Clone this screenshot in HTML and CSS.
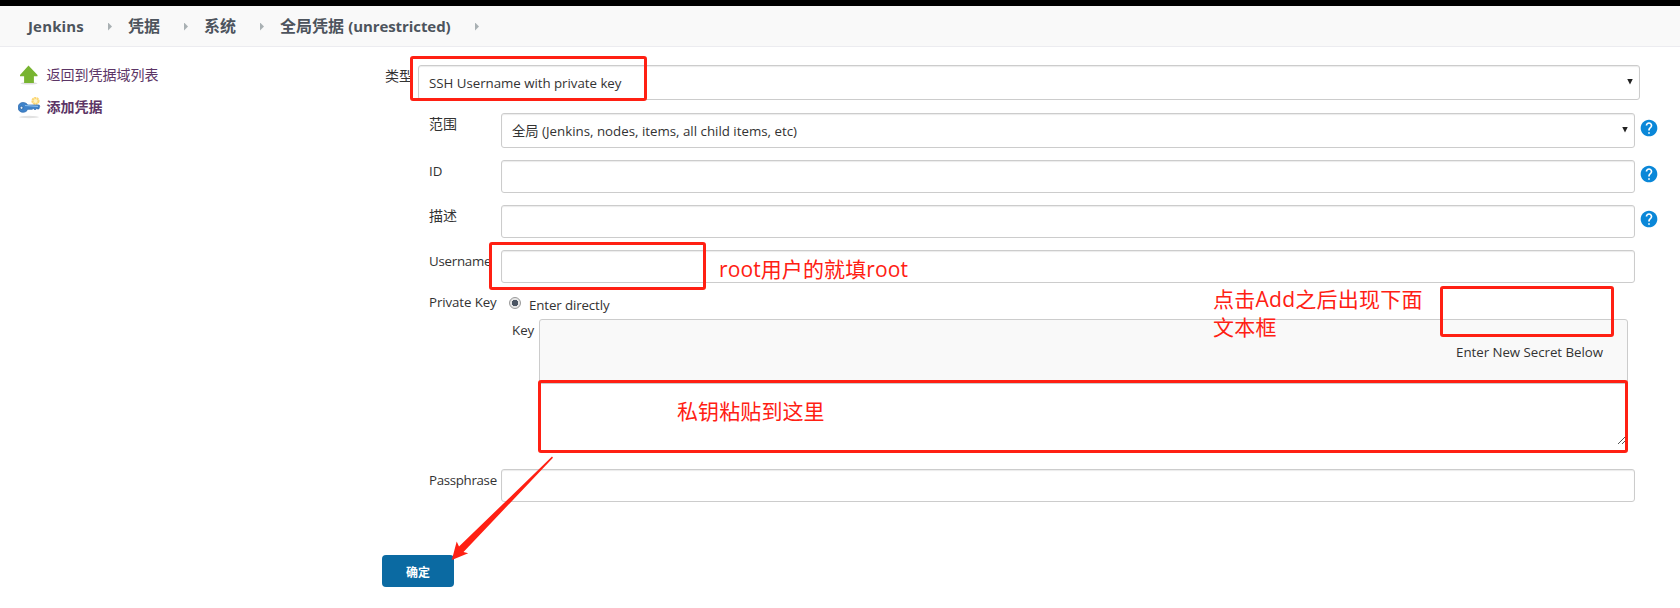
FILE: index.html
```html
<!DOCTYPE html>
<html lang="zh-CN">
<head>
<meta charset="utf-8">
<title>全局凭据 (unrestricted) [Jenkins]</title>
<link rel="stylesheet" href="styles.css">
</head>
<body>
<svg class="defs" width="0" height="0">
  <symbol id="help" viewBox="0 0 24 24">
    <path fill="#0a87d8" d="M12 2C6.48 2 2 6.48 2 12s4.48 10 10 10 10-4.48 10-10S17.52 2 12 2z"/>
    <path fill="#fff" d="M13 19h-2v-2h2v2zm2.07-7.75-.9.92C13.45 12.9 13 13.5 13 15h-2v-.5c0-1.1.45-2.1 1.17-2.83l1.24-1.26c.37-.36.59-.86.59-1.41 0-1.1-.9-2-2-2s-2 .9-2 2H8c0-2.21 1.79-4 4-4s4 1.79 4 4c0 .88-.36 1.68-.93 2.25z"/>
  </symbol>
</svg>
<header class="topbar">
  <nav class="crumbs">
    <a class="crumb crumb-home">Jenkins</a><i class="sep"></i>
    <a class="crumb">凭据</a><i class="sep"></i>
    <a class="crumb">系统</a><i class="sep"></i>
    <a class="crumb crumb-last">全局凭据 <span class="latin">(unrestricted)</span></a><i class="sep sep-last"></i>
  </nav>
</header>
<div class="page">
  <aside class="side">
    <a class="task">
      <svg width="24" height="24" viewBox="0 0 24 24"><ellipse cx="11" cy="20.3" rx="8.500" ry="1.300" fill="#ddd"/><path d="M10.500 2.500 19.500 12v1.300H15.900V20H6.100V13.300H2V12Z" fill="#78b431"/></svg>
      <span>返回到凭据域列表</span>
    </a>
    <a class="task current">
      <svg width="24" height="24" viewBox="0 0 24 24"><ellipse cx="11" cy="22" rx="10" ry="1.200" fill="#e2e2e2"/><circle cx="17.500" cy="6" r="3" fill="#fff3c0" stroke="#fbd674" stroke-width="2.200" stroke-dasharray="2 .5"/><path d="M5 7.500c2.500 0 4 1.200 4.600 2.500H20.500q1.200 0 1.200 1.300L20.800 14h-1.500l-.6-1.200-.8 1.700h-1.700l-.8-1.500-1 1.300H9.700C9 16 7.500 17.300 5 17.300c-3 0-4.900-2.200-4.900-4.900S2 7.500 5 7.500Z" fill="#3f83ca" stroke="#2e6aad" stroke-width=".7"/><path d="M7 10.500 20 11.300" stroke="#89bdea" stroke-width="1.200"/><circle cx="3.500" cy="12.800" r="1.500" fill="#e9f1f8" stroke="#265e9c" stroke-width=".8"/></svg>
      <span>添加凭据</span>
    </a>
  </aside>
  <main class="form">
    <div class="row row-kind"><label>类型</label><div class="control select"><span class="t-kind">SSH Username with private key</span><i class="caret"></i></div></div>
    <div class="nested">
      <div class="row row-select"><label class="cjk">范围</label><div class="control select"><span class="t-scope">全局 (Jenkins, nodes, items, all child items, etc)</span><i class="caret"></i></div><svg class="help"><use href="#help"/></svg></div>
      <div class="row"><label class="l-id">ID</label><div class="control"></div><svg class="help"><use href="#help"/></svg></div>
      <div class="row"><label class="cjk">描述</label><div class="control"></div><svg class="help"><use href="#help"/></svg></div>
      <div class="row"><label class="l-user">Username</label><div class="control"></div></div>
      <div class="row row-key">
        <label class="l-private">Private Key</label>
        <div class="keybox">
          <div class="choice"><i class="radio"></i><span>Enter directly</span></div>
          <div class="secret">
            <label class="l-key">Key</label>
            <div class="panel">
              <div class="panel-head">Enter New Secret Below</div>
              <div class="textarea"><svg width="10" height="10" viewBox="0 0 10 10"><path d="M1 9 9 1M5 9 9 5" stroke="#555" fill="none"/></svg></div>
            </div>
          </div>
        </div>
      </div>
      <div class="row row-pass"><label class="l-pass">Passphrase</label><div class="control"></div></div>
    </div>
    <div class="button">确定</div>
  </main>
</div>
<div class="mark mark-kind"></div>
<div class="mark mark-user"></div>
<div class="mark mark-add"></div>
<div class="mark mark-secret"></div>
<div class="note note-user">root用户的就填root</div>
<div class="note note-add">点击Add之后出现下面<br>文本框</div>
<div class="note note-secret">私钥粘贴到这里</div>
<svg class="arrow" width="110" height="110" viewBox="448 454 110 110"><path d="M552 456.600 553 457.800 463.500 552 468.200 553.300 451.800 560 456.700 541.500 459 546.500Z" fill="#ff2013"/></svg>
</body>
</html>
```
FILE: styles.css
```css
* { box-sizing: border-box; }
body {
  margin: 0;
  width: 1680px;
  height: 608px;
  position: relative;
  overflow: hidden;
  background: #fff;
  color: #333;
  font: 13.3px/20px "Open Sans", "Noto Sans CJK SC", sans-serif;
}
.defs { position: absolute; }
.topbar {
  height: 47px;
  border-top: 6px solid #000;
  border-bottom: 1px solid #ececf0;
  background: #f9f9f9;
}
.crumbs {
  display: flex;
  align-items: center;
  height: 40px;
  padding-left: 28px;
  font-size: 16px;
  font-weight: 700;
  color: #4d545d;
  white-space: nowrap;
}
.crumb { width: 32px; }
.crumb-home { width: 56px; font-size: 15px; letter-spacing: .15px; }
.crumb-last { width: 171px; }
.crumb-last .latin { font-size: 15px; letter-spacing: -.08px; }
.sep {
  width: 4px;
  height: 8px;
  margin: 1px 16px 0 24px;
  background: #a9b0b3;
  clip-path: polygon(0 0, 100% 50%, 0 100%);
}
.page { display: flex; }
.side {
  width: 381px;
  padding: 16px 0 0 18px;
}
.task {
  display: flex;
  align-items: center;
  gap: 4.5px;
  height: 24px;
  margin-bottom: 8px;
  font-size: 14px;
  color: #5c3566;
}
.task.current { font-weight: 700; }
.form { flex: 1; padding-top: 18px; }
.row {
  display: flex;
  align-items: flex-start;
  height: 33px;
  margin-bottom: 12px;
}
label {
  width: 72px;
  padding-top: 1px;
  flex: none;
  white-space: nowrap;
}
.cjk { font-size: 14px; }
.l-user { letter-spacing: -.25px; }
.l-private { letter-spacing: -.1px; }
.l-pass { letter-spacing: -.32px; }
.control {
  width: 1134px;
  height: 33px;
  border: 1px solid #ccc;
  border-radius: 3px;
  background: #fff;
  box-shadow: inset 0 1px 1px rgba(0, 0, 0, .08);
}
.select {
  display: flex;
  align-items: center;
  justify-content: space-between;
  height: 35px;
  padding: 0 6px 0 10px;
}
.caret {
  width: 6px;
  height: 6px;
  margin-bottom: 2px;
  background: #222;
  clip-path: polygon(0 0, 100% 0, 50% 100%);
}
.row-kind, .row-select { height: 35px; }
.row-kind { margin-bottom: 13px; padding-left: 4px; }
.row-kind label { width: 33px; font-size: 14px; }
.row-kind .control { width: 1222px; }
.t-kind { letter-spacing: -.03px; }
.nested { padding-left: 48px; }
.help {
  width: 20px;
  height: 20px;
  margin: 4px 0 0 4px;
}
.row-select .help { margin-top: 5px; }
.row-key { height: 135px; margin-bottom: 39px; }
.row-key > label { padding-top: 0; margin-top: -3px; }
.row-key .keybox { width: 1127px; }
.choice {
  display: flex;
  align-items: center;
  height: 20px;
  padding-left: 8px;
  letter-spacing: -.12px;
}
.radio {
  width: 12px;
  height: 12px;
  margin: -4px 8px 0 0;
  border: 1px solid #999;
  border-radius: 50%;
  background: radial-gradient(circle, #4b5563 0 3px, #e6e6e6 3.500px);
}
.secret { display: flex; padding-left: 11px; margin-top: 4px; }
.l-key { width: 27px; }
.panel {
  width: 1089px;
  height: 132px;
  border: 1px solid #ccc;
  border-radius: 3px;
  background: #f9f9f9;
}
.panel-head {
  height: 63px;
  padding: 22px 24px 0 0;
  text-align: right;
  letter-spacing: -.04px;
}
.textarea {
  display: flex;
  align-items: flex-end;
  justify-content: flex-end;
  height: 67px;
  padding-bottom: 5px;
  border-top: 1px solid #ccc;
  background: #fff;
}
.button {
  width: 72px;
  height: 32px;
  margin: 53px 0 0 1px;
  border-radius: 4px;
  background: #0b6aa2;
  color: #fff;
  font: 700 12px/33px "Noto Sans CJK SC", sans-serif;
  text-align: center;
}
.mark {
  position: absolute;
  border: 3px solid #ff2013;
  border-radius: 3px;
}
.mark-kind { left: 410px; top: 56px; width: 237px; height: 45px; }
.mark-user { left: 489px; top: 242px; width: 217px; height: 48px; }
.mark-add { left: 1440px; top: 286px; width: 174px; height: 51px; }
.mark-secret { left: 538px; top: 380px; width: 1090px; height: 73px; }
.note {
  position: absolute;
  color: #ff2013;
  font-size: 21px;
  line-height: 28px;
  letter-spacing: .1px;
  white-space: nowrap;
}
.note-user { left: 719px; top: 255px; }
.note-add { left: 1213px; top: 285px; letter-spacing: .25px; }
.note-secret { left: 677px; top: 397px; }
.arrow { position: absolute; left: 448px; top: 454px; }
```
